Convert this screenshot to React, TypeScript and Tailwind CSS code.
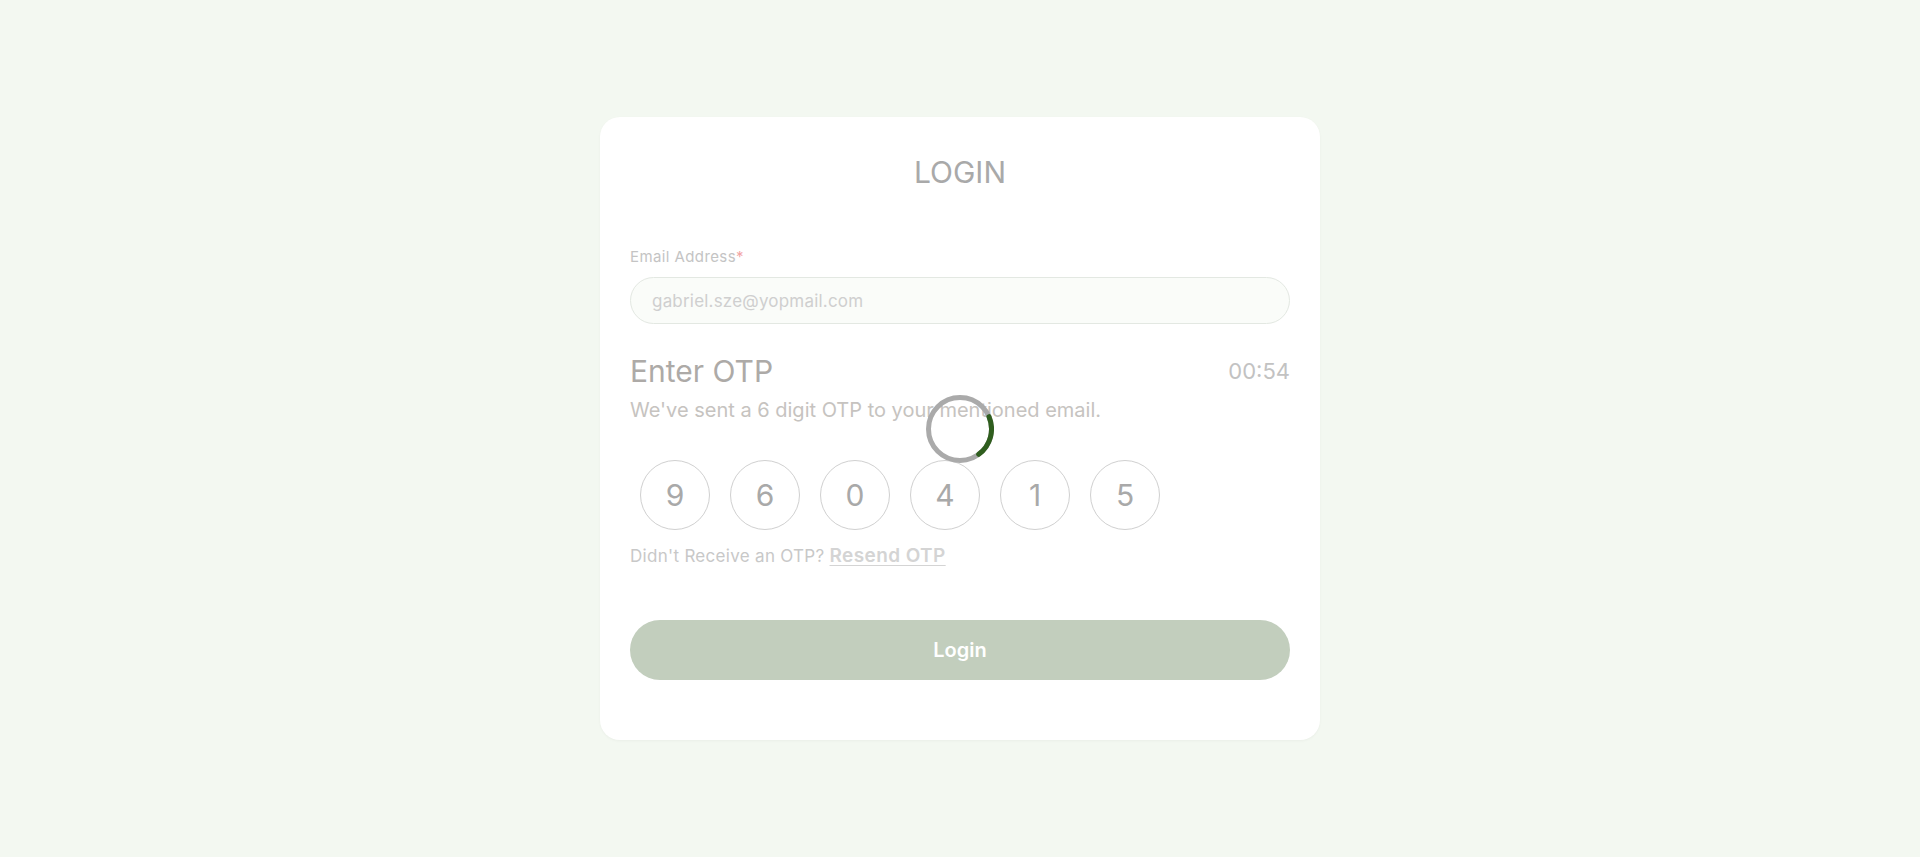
import React from "react";

export default function App() {
  const digits = ["9", "6", "0", "4", "1", "5"];
  return (
    <div className="min-h-screen w-full bg-[#f3f8f1] flex justify-center pt-[117px]" style={{ fontFamily: "Inter, 'Noto Sans', sans-serif" }}>
      <div className="w-[720px] h-[623px] bg-white rounded-[20px] shadow-[0_1px_3px_rgba(0,0,0,0.04)] px-[30px] pt-[37px] pb-[60px] flex flex-col">
        <h1 className="text-[30px] leading-[36px] text-center text-[#a9a9a9] font-normal">LOGIN</h1>

        <label className="mt-[57px] text-[15px] leading-[20px] tracking-[0.4px] text-[#c4c4c4]">
          Email Address<span className="text-[#f2a5a5]">*</span>
        </label>
        <input
          readOnly
          value="gabriel.sze@yopmail.com"
          className="mt-[10px] h-[47px] w-full rounded-full border border-[#e3e8e2] bg-[#fafcf9] px-[21px] text-[17px] tracking-[0.2px] text-[#cfcfcf] outline-none"
        />

        <div className="mt-[30px] flex items-center justify-between">
          <span className="text-[30px] leading-[34px] text-[#adaaa7]">Enter OTP</span>
          <span className="text-[22px] leading-[34px] text-[#c2c2c2]">00:54</span>
        </div>
        <p className="mt-[8px] text-[20px] leading-[28px] text-[#c6c3c0]">
          We've sent a 6 digit OTP to your mentioned email.
        </p>

        <div className="mt-[36px] flex gap-[20px] pl-[10px]">
          {digits.map((d, i) => (
            <div
              key={i}
              className="w-[70px] h-[70px] rounded-full border border-[#d0d0d0] flex items-center justify-center text-[30px] text-[#a9a9a9]"
            >
              {d}
            </div>
          ))}
        </div>

        <div className="mt-[12px] flex items-baseline gap-[5px] leading-[28px]">
          <span className="text-[17px] tracking-[0.3px] text-[#c8c8c8]">Didn't Receive an OTP?</span>
          <span className="text-[19px] tracking-[0.4px] font-semibold text-[#d4d4d4] underline underline-offset-[3px]">Resend OTP</span>
        </div>

        <button className="mt-[50px] h-[60px] w-full rounded-full bg-[#c2cebd] text-white text-[20px] font-semibold">
          Login
        </button>
      </div>

      <div className="fixed inset-0 flex items-center justify-center pointer-events-none">
        <svg width="68" height="68" viewBox="0 0 68 68">
          <circle cx="34" cy="34" r="31.5" fill="none" stroke="#aaaaaa" strokeWidth="5" />
          <circle
            cx="34"
            cy="34"
            r="31.5"
            fill="none"
            stroke="#2f5e1e"
            strokeWidth="5"
            strokeLinecap="round"
            strokeDasharray="42 200"
            transform="rotate(-23 34 34)"
          />
        </svg>
      </div>
    </div>
  );
}
